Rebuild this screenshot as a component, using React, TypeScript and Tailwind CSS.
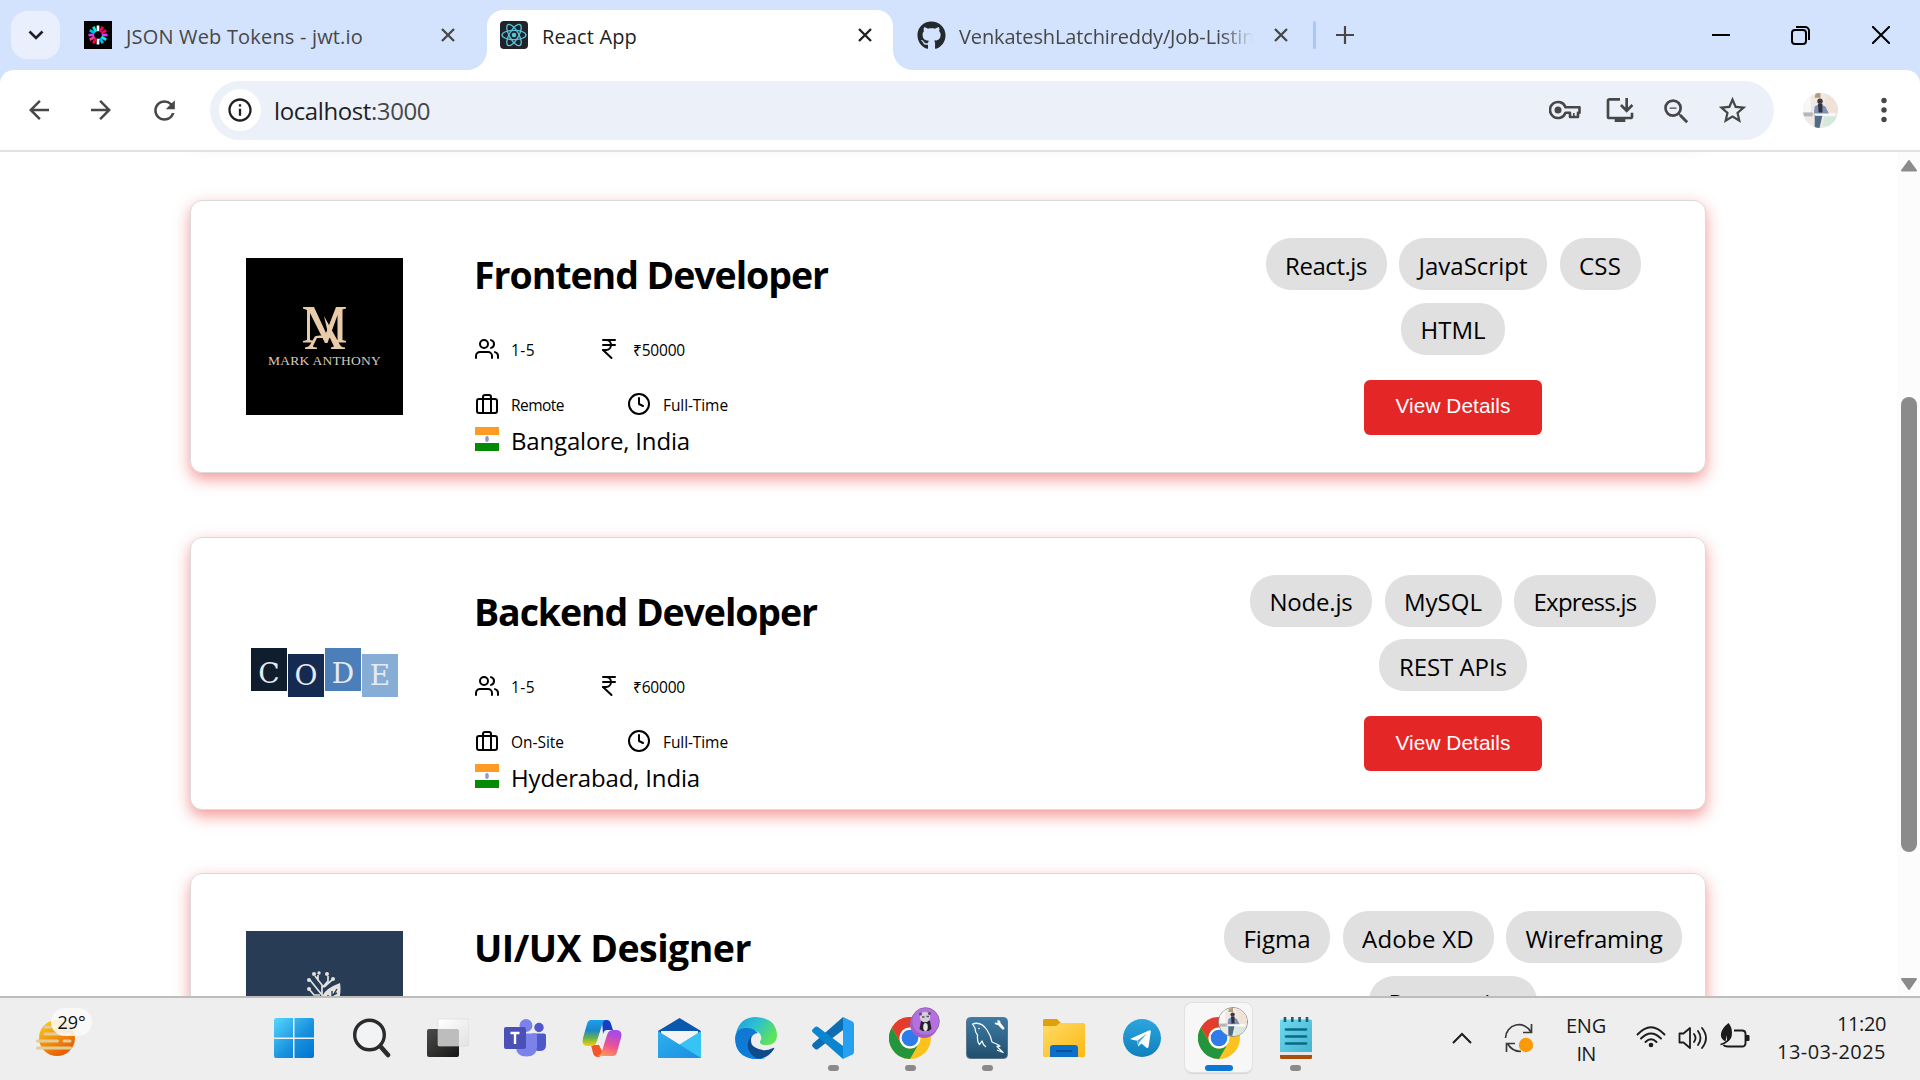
import React, { useLayoutEffect, useRef, useState } from "react";
import { MdArrowBack, MdArrowForward, MdRefresh, MdInstallDesktop, MdZoomOut, MdStarBorder, MdInfoOutline } from "react-icons/md";
import { FaGithub } from "react-icons/fa";
import { FiUsers, FiBriefcase, FiClock } from "react-icons/fi";
import { IndianRupee } from "lucide-react";

/* Single line of text whose tracking is tuned so that it spans `width` pixels. */
function Fit({ children, width, className = "" }: { children: string; width: number; className?: string }) {
  const ref = useRef<HTMLSpanElement>(null);
  const [spacing, setSpacing] = useState(0);
  useLayoutEffect(() => {
    if (ref.current) {
      const natural = ref.current.getBoundingClientRect().width;
      setSpacing((width - natural) / children.length);
    }
  }, [children, width]);
  return (
    <span ref={ref} className={"inline-block whitespace-nowrap " + className} style={{ letterSpacing: spacing + "px" }}>
      {children}
    </span>
  );
}

function CloseX({ color }: { color: string }) {
  return (
    <svg width="16" height="16" viewBox="0 0 16 16" stroke={color} strokeWidth="2.3" fill="none">
      <path d="M2 2l12 12M14 2L2 14" />
    </svg>
  );
}

function JwtLogo() {
  const colors = ["#fff", "#fb015b", "#fb015b", "#d63aff", "#00f2e6", "#00b9f1", "#fff", "#fb015b", "#fb3b7b", "#d63aff", "#00b9f1", "#00f2e6"];
  return (
    <svg width="28" height="28" viewBox="0 0 28 28">
      <rect width="28" height="28" fill="#000" />
      {colors.map((c, i) => (
        <path key={i} d="M14 4.500v5.700" stroke={c} strokeWidth="2.700" transform={`rotate(${i * 30} 14 14)`} />
      ))}
    </svg>
  );
}

function ReactLogo() {
  return (
    <svg width="28" height="28" viewBox="0 0 28 28" fill="none" stroke="#58c4dc" strokeWidth="1.3">
      <rect width="28" height="28" rx="4" fill="#20232a" stroke="none" />
      {[0, 60, 120].map((a) => (
        <ellipse key={a} cx="14" cy="14" rx="12" ry="4.6" transform={`rotate(${a} 14 14)`} />
      ))}
      <circle cx="14" cy="14" r="2.3" fill="#58c4dc" stroke="none" />
    </svg>
  );
}

function TabStrip() {
  return (
    <div className="flex h-[70px] bg-[#d3e3fd]">
      <div className="flex w-[487px] items-center pl-[11px]">
        <div className="flex h-12 w-[49px] items-center justify-center rounded-2xl bg-[#e9effd]">
          <svg width="16" height="10" viewBox="0 0 16 10" fill="none" stroke="#1f1f1f" strokeWidth="2.6">
            <path d="M1.5 1.5L8 8l6.500-6.500" />
          </svg>
        </div>
        <div className="ml-6"><JwtLogo /></div>
        <div className="ml-[14px] w-[314px] pt-[3px] text-[20px] leading-[28px] text-[#474747]"><Fit width={237}>JSON Web Tokens - jwt.io</Fit></div>
        <CloseX color="#474747" />
      </div>
      <div className="relative mt-[10px] flex w-[406px] items-center rounded-t-[16px] bg-white pb-[10px] pl-[13px]">
        <svg className="absolute bottom-0 left-[-20px]" width="20" height="20"><path d="M20 0v20H0A20 20 0 0 0 20 0z" fill="#fff" /></svg>
        <svg className="absolute right-[-20px] bottom-0" width="20" height="20"><path d="M0 0v20h20A20 20 0 0 1 0 0z" fill="#fff" /></svg>
        <ReactLogo />
        <div className="ml-[14px] w-[315px] pt-[3px] text-[20px] leading-[28px] text-[#1f1f1f]"><Fit width={95}>React App</Fit></div>
        <CloseX color="#1f1f1f" />
      </div>
      <div className="flex items-center pl-[24px]">
        <FaGithub size={29} color="#24292f" />
        <div className="ml-[13px] w-[294px] pt-[3px] text-[20px] leading-[28px] text-[#474747] [mask-image:linear-gradient(90deg,#000_262px,transparent_294px)]">
          <Fit width={306}>VenkateshLatchireddy/Job-Listing</Fit>
        </div>
        <div className="ml-[20px]"><CloseX color="#474747" /></div>
        <div className="ml-[24px] h-7 w-[3px] rounded bg-[#a8c7fa]" />
        <svg className="ml-5" width="18" height="18" stroke="#474747" strokeWidth="2.2"><path d="M9 0v18M0 9h18" /></svg>
      </div>
      <div className="ml-auto flex items-center pr-[30px]">
        <svg width="18" height="18" stroke="#000" strokeWidth="2"><path d="M0 9h18" /></svg>
        <svg className="ml-[61px]" width="20" height="20" fill="none" stroke="#000" strokeWidth="2">
          <rect x="1" y="5" width="14" height="14" rx="3" />
          <path d="M5 2h9a4 4 0 0 1 4 4v9" />
        </svg>
        <svg className="ml-[61px]" width="18" height="18" stroke="#000" strokeWidth="2"><path d="M0 0l18 18M18 0L0 18" /></svg>
      </div>
    </div>
  );
}

function Person({ size }: { size: number }) {
  return (
    <svg width={size} height={size} viewBox="0 0 36 36">
      <defs><clipPath id="person-clip"><circle cx="18" cy="18" r="18" /></clipPath></defs>
      <g clipPath="url(#person-clip)">
        <rect width="36" height="36" fill="#efe9e4" />
        <rect width="8" height="22" fill="#f8f7f5" />
        <rect x="23" width="13" height="20" fill="#f0e2d6" />
        <rect y="20" width="10" height="4" fill="#b4b8b5" />
        <path d="M22 24h12v10H20z" fill="#d5e8dd" />
        <path d="M12 14l5-3 6 3 4 8H11z" fill="#7d90b8" />
        <path d="M15.500 11h4.500v9h-4z" fill="#31303e" />
        <circle cx="17.500" cy="8.500" r="2.800" fill="#463838" />
        <path d="M12 23h8l-3 13h-5z" fill="#4f6d86" />
        <path d="M11 21h22v2.500H13z" fill="#fbfcfb" />
        <path d="M13 0h5v5h-6z" fill="#b59b77" />
      </g>
    </svg>
  );
}

function Toolbar() {
  return (
    <div className="bg-[#d3e3fd]">
      <div className="flex h-[82px] items-center rounded-t-[14px] border-b-2 border-[#e1e3e1] bg-white">
        <MdArrowBack className="ml-[24px]" size={30} color="#474747" />
        <MdArrowForward className="ml-[32px]" size={30} color="#474747" />
        <MdRefresh className="ml-[33px]" size={31} color="#474747" />
        <div className="ml-[30px] flex h-[59px] w-[1564px] items-center rounded-full bg-[#ecf0f9] pl-[9px] pr-[25px]">
          <div className="flex size-[42px] items-center justify-center rounded-full bg-white"><MdInfoOutline size={28} color="#1f1f1f" /></div>
          <div className="ml-[13px] pt-[2px] text-[24px] leading-[32px] text-[#1f1f1f]"><Fit width={97}>localhost</Fit><Fit width={59} className="text-[#474747]">:3000</Fit></div>
          <div className="ml-auto flex items-center">
            <svg width="32" height="20" viewBox="0 0 32 20" fill="none" stroke="#474747" strokeWidth="2.600">
              <path d="M16.500 7.300A8 8 0 1 0 16.500 12.700H21V17h8v-4.300h1.500V7.300z" strokeLinejoin="round" />
              <circle cx="9" cy="10" r="3.500" fill="#474747" stroke="none" />
              <path d="M24.800 17v-4" strokeWidth="1.600" />
            </svg>
            <MdInstallDesktop className="ml-[23px]" size={32} color="#474747" />
            <MdZoomOut className="ml-[24px] mt-[2px]" size={33} color="#474747" />
            <MdStarBorder className="ml-[23px]" size={33} color="#474747" />
          </div>
        </div>
        <div className="ml-[29px]"><Person size={35} /></div>
        <svg className="ml-[43px]" width="6" height="26" fill="#474747"><circle cx="3" cy="3.500" r="2.700" /><circle cx="3" cy="13" r="2.700" /><circle cx="3" cy="22.500" r="2.700" /></svg>
      </div>
    </div>
  );
}

function MarkAnthonyLogo() {
  return (
    <div className="flex size-[157px] flex-col items-center bg-black pt-[48px] text-[#e8cba8]">
      <svg width="46" height="46" viewBox="0 0 46 46" fill="#e8cba8">
        <path d="M1 1h11l12 26L34 1h10v1.500l-3.500 1V34l3.500 1v1.500H33V35l2.500-1V9L25.500 37h-2.500L8 7v27l4 1v1.500H1V35l4-1V4L1 2.500z" />
        <path d="M22 10l16 29q1.500 2.500 5 2.500V43H29v-1.500l3-1-4-8.500H15l-4 8q-.5 1 4 1.500V43H3v-1.500q4-.5 5.500-3.500l4-7q1-1.500 5-1.500h9z" />
      </svg>
      <div className="mt-[2px] h-4 font-['Liberation_Serif'] text-[13.500px] leading-[14px] text-[#d9cbbd]"><Fit width={113}>MARK ANTHONY</Fit></div>
    </div>
  );
}

function CodeLogo() {
  return (
    <div className="flex size-[157px] items-center justify-center gap-[1px] pb-[1px] font-['DejaVu_Serif','Liberation_Serif',serif] text-[28px] leading-[34px] text-[#e4eaf4]">
      <div className="mb-[6px] flex h-[43px] w-[36px] items-end justify-center bg-[#0f1d2c]">C</div>
      <div className="mt-[6px] flex h-[43px] w-[36px] items-center justify-center bg-[#152a50]">O</div>
      <div className="mb-[6px] flex h-[43px] w-[36px] items-end justify-center bg-[#4c7fb9]">D</div>
      <div className="mt-[6px] flex h-[43px] w-[36px] items-center justify-center bg-[#86add5]">E</div>
    </div>
  );
}

function LeafLogo() {
  return (
    <div className="flex size-[157px] justify-center bg-[#283d55] pt-[40px]">
      <svg width="38" height="60" viewBox="0 0 38 60" fill="none" stroke="#e4e2df" strokeWidth="1.700">
        <path d="M16 30V14L9 5M16 17l6-7V5M12 10V4M16 24L4 9M14 24H8l-5-6M18 16l8-7M10 30l-5-1" />
        <g fill="#e4e2df" stroke="none">
          <circle cx="8" cy="3" r="2" /><circle cx="13" cy="2" r="1.700" /><circle cx="21" cy="3" r="2" /><circle cx="27" cy="8" r="2" /><circle cx="3" cy="9" r="2" /><circle cx="3" cy="18" r="2" /><circle cx="5" cy="29" r="2" />
          <path d="M16 40V26q2-8 18-14 2 12-4 24l-8 8z" />
        </g>
        <path d="M21 34L31 18M22 24v6M26 20v5M31 22l-4 2M31 28l-6 2" stroke="#283d55" strokeWidth="1.400" />
      </svg>
    </div>
  );
}

type Sized = { label: string; width: number };
type Job = {
  title: Sized; logo: React.ReactNode; team?: string; pay?: string; mode?: Sized; place?: Sized; tags: Sized[];
};

const jobs: Job[] = [
  {
    title: { label: "Frontend Developer", width: 354 }, logo: <MarkAnthonyLogo />, team: "1-5", pay: "₹50000",
    mode: { label: "Remote", width: 53 }, place: { label: "Bangalore, India", width: 179 },
    tags: [{ label: "React.js", width: 82 }, { label: "JavaScript", width: 109 }, { label: "CSS", width: 42 }, { label: "HTML", width: 65 }],
  },
  {
    title: { label: "Backend Developer", width: 343 }, logo: <CodeLogo />, team: "1-5", pay: "₹60000",
    mode: { label: "On-Site", width: 53 }, place: { label: "Hyderabad, India", width: 189 },
    tags: [{ label: "Node.js", width: 83 }, { label: "MySQL", width: 78 }, { label: "Express.js", width: 103 }, { label: "REST APIs", width: 108 }],
  },
  {
    title: { label: "UI/UX Designer", width: 277 }, logo: <LeafLogo />,
    tags: [{ label: "Figma", width: 67 }, { label: "Adobe XD", width: 112 }, { label: "Wireframing", width: 137 }, { label: "Prototyping", width: 129 }],
  },
];

function Flag() {
  return (
    <svg width="24" height="24" viewBox="0 0 24 24">
      <path d="M0 0h24v8H0z" fill="#ff9a25" />
      <path d="M0 8h24v8H0z" fill="#fff" />
      <path d="M0 16h24v8H0z" fill="#058a05" />
      <ellipse cx="12" cy="12" rx="1.800" ry="3" fill="#8f97cf" />
    </svg>
  );
}

function JobFacts({ job }: { job: Job }) {
  return (
    <>
      <div className="mt-[36px] flex h-6 items-center text-[15.500px] leading-[24px]">
        <FiUsers size={24} /><span className="ml-[12px] mt-[2px]"><Fit width={24}>{job.team ?? ""}</Fit></span>
        <IndianRupee className="ml-[62px]" size={24} /><span className="ml-[12px] mt-[2px]"><Fit width={52}>{job.pay ?? ""}</Fit></span>
      </div>
      <div className="mt-[31px] flex h-6 items-center text-[15.500px] leading-[24px]">
        <FiBriefcase size={24} /><span className="ml-[12px] mt-[2px]"><Fit width={job.mode!.width}>{job.mode!.label}</Fit></span>
        <FiClock className="ml-[63px]" size={24} /><span className="ml-[12px] mt-[2px]"><Fit width={65}>Full-Time</Fit></span>
      </div>
      <div className="mt-[11px] flex h-6 text-[24px] leading-[24px]">
        <Flag /><span className="ml-[12px] mt-[2px]"><Fit width={job.place!.width}>{job.place!.label}</Fit></span>
      </div>
    </>
  );
}

function JobCard({ job }: { job: Job }) {
  return (
    <div className="flex h-[273px] w-[1516px] shrink-0 rounded-[12px] border border-[#dcdcdc] bg-white text-black shadow-[0_6px_15px_rgba(238,50,50,0.5)]">
      <div className="ml-[55px] mt-[57px]">{job.logo}</div>
      <div className="ml-[72px] mt-[48px] w-[726px]">
        <h2 className="-ml-[1px] text-[37.500px] leading-[52px] font-bold"><Fit width={job.title.width}>{job.title.label}</Fit></h2>
        {job.team && <JobFacts job={job} />}
      </div>
      <div className="mt-[37px] flex w-[504px] flex-col items-center">
        <div className="flex w-[480px] flex-wrap justify-center gap-x-[12.500px] gap-y-[12.500px]">
          {job.tags.map((t) => (
            <span key={t.label} className="flex h-[52px] items-center rounded-[25px] bg-[#e0e0e0] px-[19.500px] pt-[3px] text-[24px] leading-[36px]"><Fit width={t.width}>{t.label}</Fit></span>
          ))}
        </div>
        <button className="mt-[25px] h-[55px] w-[178px] shrink-0 rounded-[6px] bg-[#e42627] pb-[2px] font-['Liberation_Sans'] text-[20.800px] text-white"><Fit width={115}>View Details</Fit></button>
      </div>
    </div>
  );
}

function Page() {
  return (
    <div className="flex h-[844px] overflow-hidden bg-white">
      <div className="flex w-[1897px] flex-col pl-[190px]">
        <div className="-mt-[117px] h-[100px] w-[1516px] shrink-0 rounded-[12px] shadow-[0_6px_15px_rgba(238,50,50,0.5)]" />
        <div className="mt-[65px] flex flex-col gap-[63.500px]">
          {jobs.map((j) => <JobCard key={j.title.label} job={j} />)}
        </div>
      </div>
      <div className="flex w-[23px] flex-col items-center bg-[#fcfcfc] pt-2">
        <svg width="18" height="12"><path d="M9 1l7 9.500H2z" fill="#8b8b8b" stroke="#8b8b8b" strokeWidth="2" strokeLinejoin="round" /></svg>
        <div className="mt-[225px] h-[455px] w-4 shrink-0 rounded-full bg-[#8b8b8b]" />
        <svg className="mt-[126px]" width="18" height="12"><path d="M9 11L2 1h14z" fill="#8b8b8b" stroke="#8b8b8b" strokeWidth="2" strokeLinejoin="round" /></svg>
      </div>
    </div>
  );
}

function Chrome() {
  return (
    <svg width="42" height="42" viewBox="0 0 48 48">
      <circle cx="24" cy="24" r="24" fill="#fcc31e" />
      <path d="M3.200 12A24 24 0 0 1 44.800 12H24a12 12 0 0 0-10.400 18L3.200 12z" fill="#e33b2e" />
      <path d="M3.200 12l10.400 18A12 12 0 0 0 34.400 30L24 48A24 24 0 0 1 3.200 12z" fill="#24953f" />
      <circle cx="24" cy="24" r="12" fill="#fff" />
      <circle cx="24" cy="24" r="9.500" fill="#2f7bea" />
    </svg>
  );
}

function PandaBadge() {
  return (
    <svg width="31" height="32" viewBox="0 0 31 32">
      <circle cx="14" cy="17" r="14" fill="#a55bd2" />
      <circle cx="15.500" cy="14.500" r="13.800" fill="#b66fe3" stroke="#8f6ba8" />
      <path d="M11 14q4-3 9 0l1.500 8-3 2h-6l-3-2z" fill="#222127" />
      <ellipse cx="15.500" cy="20" rx="2.300" ry="4" fill="#e6e3ea" />
      <circle cx="15" cy="10" r="5.200" fill="#d3cfd8" />
      <circle cx="10.500" cy="7" r="1.500" fill="#56525c" /><circle cx="19.500" cy="6.500" r="1.500" fill="#56525c" />
      <path d="M12 10h2.500M16.500 9.500H19" stroke="#55525a" strokeWidth="1.400" />
    </svg>
  );
}

function StartIcon() {
  return (
    <svg width="40" height="40" viewBox="0 0 40 40">
      <defs><linearGradient id="st" gradientUnits="userSpaceOnUse" x1="0" y1="0" x2="40" y2="40"><stop stopColor="#56d8ff" /><stop offset=".55" stopColor="#1a93df" /><stop offset="1" stopColor="#0073d2" /></linearGradient></defs>
      <path d="M2 0h17v19.500H0V2q0-2 2-2zM20.500 0H38q2 0 2 2v17.500H20.500zM0 21h19v19H2q-2 0-2-2zM20.500 21H40v17q0 2-2 2H20.500z" fill="url(#st)" />
    </svg>
  );
}

function SearchIcon() {
  return (
    <svg width="38" height="40" viewBox="0 0 38 40" fill="none" stroke="#2b2b2b" strokeWidth="3.400">
      <circle cx="16.500" cy="17" r="14.800" fill="#f1f3f4" /><path d="M27.500 28.500l7.500 8.500" strokeWidth="4.600" strokeLinecap="round" />
    </svg>
  );
}

function TaskViewIcon() {
  return (
    <svg width="42" height="40" viewBox="0 0 42 40">
      <defs>
        <linearGradient id="tv1" x1="0" y1="0" x2="1" y2="1"><stop stopColor="#4c4c4a" /><stop offset="1" stopColor="#161616" /></linearGradient>
        <linearGradient id="tv2" x1="0" y1="0" x2="1" y2="1"><stop stopColor="#fff" /><stop offset="1" stopColor="#e2e2e2" /></linearGradient>
      </defs>
      <rect y="11" width="32" height="28" rx="2" fill="url(#tv1)" />
      <rect x="11" y="1" width="31" height="27" rx="1.500" fill="url(#tv2)" stroke="#d9d9d9" strokeWidth=".6" />
      <path d="M11 11h19q2 0 2 2v15H13q-2 0-2-2z" fill="#bdbdbd" />
    </svg>
  );
}

function TeamsIcon() {
  return (
    <svg width="42" height="38" viewBox="0 0 42 38">
      <circle cx="35" cy="8.500" r="4.700" fill="#4f57c9" /><path d="M28 14.500h12q2 0 2 2V26q0 6-6.500 6T28 26z" fill="#4f57c9" />
      <circle cx="22" cy="6.500" r="6.500" fill="#7b83eb" /><path d="M12 14.500h19q2 0 2 2V28q0 9.500-10.500 9.500T12 28z" fill="#7b83eb" />
      <rect y="8" width="22" height="22" rx="2" fill="#4a50b5" />
      <path d="M6.500 14h9M11 14v11" stroke="#fff" strokeWidth="2.400" />
    </svg>
  );
}

function CopilotIcon() {
  return (
    <svg width="40" height="38" viewBox="0 0 40 38">
      <defs>
        <linearGradient id="cp1" x1="0" y1="0" x2="0" y2="1"><stop stopColor="#1aa0ee" /><stop offset=".4" stopColor="#1c86c8" /><stop offset=".7" stopColor="#6bb34a" /><stop offset="1" stopColor="#ffd000" /></linearGradient>
        <linearGradient id="cp2" x1="0.300" y1="0" x2="0" y2="1"><stop stopColor="#a64be6" /><stop offset=".5" stopColor="#f0528f" /><stop offset="1" stopColor="#ffa54d" /></linearGradient>
      </defs>
      <path d="M20 1h5q3 0 4 4l2 6h-6q-3 0-4 4z" fill="#173fc4" />
      <path d="M9 26h8l4 8q-2 4-5 4-4 0-5-4z" fill="#f4552b" />
      <path d="M9 1h14q-2 1-3 5l-5 16q-1.500 5-6 5H6q-7 0-5-8L5 5q1-4 4-4z" fill="url(#cp1)" />
      <path d="M31 37H16q3-1 4-5l5-16q1.500-5 6-5h3q7 0 5 8l-4 14q-1 4-4 4z" fill="url(#cp2)" />
    </svg>
  );
}

function MailIcon() {
  return (
    <svg width="43" height="40" viewBox="0 0 43 40">
      <defs><linearGradient id="ml" x1="0" y1="0" x2="1" y2="1"><stop stopColor="#2fb0ee" /><stop offset="1" stopColor="#1b8fe0" /></linearGradient></defs>
      <path d="M21.500 0L43 13v8H0v-8z" fill="#0a58ae" />
      <path d="M3 13h37v14H3z" fill="#f4f4f5" />
      <path d="M43 13v27H0z" fill="#37c3f3" />
      <path d="M0 13l43 27H0z" fill="url(#ml)" />
    </svg>
  );
}

function EdgeIcon() {
  return (
    <svg width="42" height="42" viewBox="0 0 42 42">
      <defs>
        <linearGradient id="eg1" x1="0" y1="0" x2="1" y2=".5"><stop stopColor="#1d9de2" /><stop offset=".5" stopColor="#2cc0d0" /><stop offset="1" stopColor="#5ee35a" /></linearGradient>
        <linearGradient id="eg2" x1="0" y1="0" x2=".5" y2="1"><stop stopColor="#1176cf" /><stop offset="1" stopColor="#0c7fdd" /></linearGradient>
      </defs>
      <path d="M1 16Q5 0 21 0q20 1 21 18 0 10-11 10-7 0-6-4 3-4-1-8Q15 8 1 16z" fill="url(#eg1)" />
      <path d="M0 21q1-10 10-10 10-1 14 7-6-2-8 6-1 15 14 17-5 2-12 1Q0 39 0 21z" fill="url(#eg2)" />
      <path d="M16 19q-9 14 6 22.500Q33 42 39 32q1-2-1-1-10 5-18-1-4-4-4-11z" fill="#114a8b" />
      <path d="M16 24q0-8 8-8 4 5 1 8-1 5 7 6-8 4-14-1-2-2-2-5z" fill="#eee" />
    </svg>
  );
}

function VsCodeIcon() {
  return (
    <svg width="42" height="42" viewBox="0 0 42 42">
      <path d="M31 0v13L6 32q-1.500 1-3 0l-2.500-2.500q-1-1.500.5-3L31 0z" fill="#0c6db3" />
      <path d="M31 42V29L6 10q-1.500-1-3 0L.5 12.500q-1 1.500.5 3L31 42z" fill="#0a86d1" />
      <path d="M31 0l9.500 4.500Q42 5.500 42 7v28q0 1.500-1.500 2.500L31 42z" fill="#27a0f2" />
    </svg>
  );
}

function MysqlIcon() {
  return (
    <svg width="42" height="42" viewBox="0 0 42 42" fill="none" stroke="#f2f7fa" strokeWidth="1.300" strokeLinejoin="round">
      <defs><linearGradient id="my" x1="0" y1="0" x2="0" y2="1"><stop stopColor="#3d7ba5" /><stop offset="1" stopColor="#214f6d" /></linearGradient></defs>
      <rect x=".5" y=".5" width="41" height="41" rx="4" fill="url(#my)" stroke="#5a7688" strokeWidth="1" />
      <path d="M20 30q-3-2-4-6-2 3-2.500 3.500Q11 25 11.500 18 9 15 9 11L6.500 7Q15 4 21 13q4 6 5 12 5 2 8 4l-3 .5 6 6-6-2.500" />
      <circle cx="13" cy="11.500" r=".8" fill="#fff" stroke="none" />
      <path d="M28.500 5.500l3 .5v-3q3 0 3 3l4 5q0 2-2 1.500l-4.500-4.500q-3 0-3.500-2.500z" fill="#fff" stroke="none" />
    </svg>
  );
}

function FolderIcon() {
  return (
    <svg width="42" height="38" viewBox="0 0 42 38">
      <defs><linearGradient id="fd" x1="0" y1="0" x2="1" y2="1"><stop stopColor="#ffdb66" /><stop offset="1" stopColor="#fbb914" /></linearGradient></defs>
      <path d="M1.500 0H14l4 4-3 6H0V1.500Q0 0 1.500 0z" fill="#dfa00c" />
      <path d="M0 7h13l4-3h23.500Q42 4 42 5.500v31q0 1.500-1.500 1.500h-39Q0 38 0 36.500z" fill="url(#fd)" />
      <path d="M7 38V29q0-3 3-3h22q3 0 3 3v9z" fill="#0c6fc9" /><path d="M13 32h16" stroke="#0a4f96" strokeWidth="1.600" />
    </svg>
  );
}

function TelegramIcon() {
  return (
    <svg width="38" height="38" viewBox="0 0 38 38">
      <defs><linearGradient id="tg" x1="0" y1="0" x2="0" y2="1"><stop stopColor="#2da5df" /><stop offset="1" stopColor="#0f80bb" /></linearGradient></defs>
      <circle cx="19" cy="19" r="19" fill="url(#tg)" />
      <path d="M8 19.500L26.500 11.200q1.600-.3 1.300 1.500L25.500 28q-.6 1.300-2 .7l-5-4.200-2.600 2.500q-1 .6-1-.6l-.6-4.700-6-1.300q-1.300-.3-.3-.9z" fill="#fff" />
      <path d="M14.300 21.500l9.700-7-7.500 8.500-.8 3.500z" fill="#4aa9d8" />
    </svg>
  );
}

function NotepadIcon() {
  return (
    <svg width="32" height="42" viewBox="0 0 32 42">
      <defs><linearGradient id="np" x1="0" y1="0" x2="1" y2="1"><stop stopColor="#6fdaf0" /><stop offset="1" stopColor="#43b3cf" /></linearGradient></defs>
      <path d="M0 36h32v4.500q0 1.500-1.500 1.500h-29Q0 42 0 40.500z" fill="#a94e0d" /><path d="M0 34h32v4H0z" fill="#e6e6e6" />
      <path d="M1.500 2.500h29q1.500 0 1.500 1.500v31H0V4q0-1.500 1.500-1.500z" fill="url(#np)" />
      <path d="M5 0v5M12.300 0v5M19.600 0v5M27 0v5" stroke="#155f78" strokeWidth="2.600" />
      <path d="M6 12.500h20M6 19.500h20M6 26.500h20" stroke="#0a6a84" strokeWidth="2.700" strokeLinecap="round" />
    </svg>
  );
}

function Slot({ children, mark = "none", badge }: { children: React.ReactNode; mark?: "none" | "open" | "active"; badge?: React.ReactNode }) {
  return (
    <div className="flex w-[77.100px] justify-center">
      <div className={"relative flex h-[69px] w-[67px] flex-col items-center rounded-[7px] " + (mark === "active" ? "bg-[#f7f7f7] shadow-[0_0_0_1px_#e2e2e2,0_2px_1px_#d4d4d4]" : "")}>
        <div className="mt-[14px] flex h-[42px] items-center">{children}</div>
        {badge && <div className="absolute top-[4px] left-[33px]">{badge}</div>}
        {mark === "open" && <div className="mt-[6px] h-[6px] w-[11px] rounded-full bg-[#8a8a8a]" />}
        {mark === "active" && <div className="mt-[6px] h-[6px] w-[28px] rounded-full bg-[#0a78d4]" />}
      </div>
    </div>
  );
}

function Taskbar() {
  return (
    <div className="flex h-[84px] border-t-2 border-[#bdbdbd] bg-[#eee]">
      <div className="w-[255px] pl-[36px] pt-[10px]">
        <div className="relative h-[50px] w-[60px]">
          <svg width="40" height="50" viewBox="0 0 40 50">
            <defs><linearGradient id="sun" x1="0" y1="0" x2=".6" y2="1"><stop stopColor="#ffd21c" /><stop offset="1" stopColor="#e65c05" /></linearGradient></defs>
            <circle cx="21" cy="30" r="18" fill="url(#sun)" />
            <path d="M9 19h18M9 26h25M1.500 33h20M28 33h6M1.500 40h33" stroke="#e3cd96" strokeWidth="3" strokeLinecap="round" />
          </svg>
          <div className="absolute top-0 left-[15px] flex h-7 w-[41px] items-center justify-center rounded-full bg-[#fafafa]/85 text-[18px] leading-[26px] text-[#111]"><Fit width={28}>29°</Fit></div>
        </div>
      </div>
      <div className="flex pt-[5px]">
        <Slot><StartIcon /></Slot>
        <Slot><div className="pl-[2px]"><SearchIcon /></div></Slot>
        <Slot><TaskViewIcon /></Slot>
        <Slot><TeamsIcon /></Slot>
        <Slot><CopilotIcon /></Slot>
        <Slot><MailIcon /></Slot>
        <Slot><EdgeIcon /></Slot>
        <Slot mark="open"><VsCodeIcon /></Slot>
        <Slot mark="open" badge={<PandaBadge />}><Chrome /></Slot>
        <Slot mark="open"><MysqlIcon /></Slot>
        <Slot><FolderIcon /></Slot>
        <Slot><TelegramIcon /></Slot>
        <Slot mark="active" badge={<div className="rounded-full border border-[#8d8d8d]"><Person size={28} /></div>}><Chrome /></Slot>
        <Slot mark="open"><NotepadIcon /></Slot>
      </div>
      <div className="ml-auto flex pr-[34px] text-[20px] text-[#1b1b1b]">
        <svg className="mt-[34px]" width="20" height="12" fill="none" stroke="#1b1b1b" strokeWidth="2"><path d="M1 11l9-9 9 9" /></svg>
        <svg className="ml-[32px] mt-[25px]" width="30" height="30" fill="none" stroke="#3a3a3a" strokeWidth="1.700">
          <path d="M1.500 15A13.500 13.500 0 0 1 27 9M27.500 1v8.500H19M17 28.500q-9 0-13.500-8M2.500 29v-8.500H11" />
          <circle cx="22" cy="22" r="7.200" fill="#fb9a08" stroke="none" />
        </svg>
        <div className="ml-[30px] mt-[14px] flex w-[44px] flex-col items-center leading-[28px]"><Fit width={40}>ENG</Fit><Fit width={19}>IN</Fit></div>
        <svg className="ml-[28px] mt-[27px]" width="30" height="24" fill="none" stroke="#1b1b1b" strokeWidth="1.900" strokeLinecap="round">
          <path d="M1.500 9.500Q15-5 28.500 9.500M5 13.500q10-10 20 0M9.500 17q5.500-5.500 11 0" /><circle cx="15" cy="20" r="2.300" fill="#1b1b1b" stroke="none" />
        </svg>
        <svg className="ml-[12px] mt-[27px]" width="30" height="26" fill="none" stroke="#1b1b1b" strokeWidth="1.800" strokeLinejoin="round" strokeLinecap="round">
          <path d="M1.500 8.500h4L12 3v20l-6.500-5.500h-4zM16 9q3 4 0 8M20 6q5 7 0 14M24 3q8 10 0 20" />
        </svg>
        <svg className="ml-[12px] mt-[25px]" width="30" height="26" fill="none" stroke="#1b1b1b" strokeWidth="1.900">
          <path d="M14 7.500h8q3.500 0 3.500 3.500v9q0 3.500-3.500 3.500H8q-3.500 0-4.500-1.500" /><path d="M26 12.500h3v5h-3z" fill="#1b1b1b" strokeWidth="1" />
          <path d="M8.500 0q3.500 4 3.500 10 0 6-4 8.500l-1 .5V12l-1.500 6.500Q0 16 1 10.500 2 5 8.500 0z" fill="#1b1b1b" stroke="none" />
          <path d="M0.500 21.500q5-1 8-5" strokeWidth="1.500" />
        </svg>
        <div className="ml-[27px] mt-[12px] flex w-[109px] flex-col items-end leading-[28px]"><Fit width={49}>11:20</Fit><Fit width={109}>13-03-2025</Fit></div>
      </div>
    </div>
  );
}

export default function App() {
  return (
    <div className="flex h-[1080px] w-[1920px] flex-col overflow-hidden bg-white font-['Open_Sans','Noto_Sans',sans-serif]">
      <TabStrip />
      <Toolbar />
      <Page />
      <Taskbar />
    </div>
  );
}
